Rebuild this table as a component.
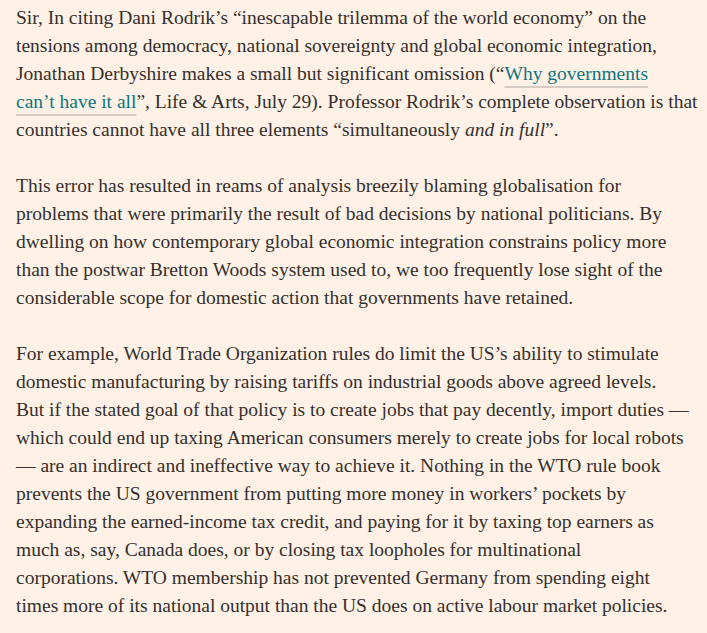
export default function App() {
  const p = "mb-[28px] whitespace-nowrap";
  const link =
    "text-[#0d7680] underline decoration-2 decoration-[#d4cbc2] underline-offset-[6px]";
  return (
    <div className="min-h-screen w-full bg-[#fff1e5] pl-[16px] pr-[4px] pt-[4px] text-[19.5px] leading-[28px] text-[#33302e] [font-family:'Liberation_Serif',serif]">
      <p className={p}>
        Sir, In citing Dani Rodrik’s “inescapable trilemma of the world economy” on the
        <br />
        tensions among democracy, national sovereignty and global economic integration,
        <br />
        Jonathan Derbyshire makes a small but significant omission (“
        <a className={link}>Why governments</a>
        <br />
        <a className={link}>can’t have it all</a>”, Life &amp; Arts, July 29). Professor Rodrik’s complete observation is that
        <br />
        countries cannot have all three elements “simultaneously <em>and in full</em>”.
      </p>
      <p className={p}>
        This error has resulted in reams of analysis breezily blaming globalisation for
        <br />
        problems that were primarily the result of bad decisions by national politicians. By
        <br />
        dwelling on how contemporary global economic integration constrains policy more
        <br />
        than the postwar Bretton Woods system used to, we too frequently lose sight of the
        <br />
        considerable scope for domestic action that governments have retained.
      </p>
      <p className={p}>
        For example, World Trade Organization rules do limit the US’s ability to stimulate
        <br />
        domestic manufacturing by raising tariffs on industrial goods above agreed levels.
        <br />
        But if the stated goal of that policy is to create jobs that pay decently, import duties —
        <br />
        which could end up taxing American consumers merely to create jobs for local robots
        <br />
        — are an indirect and ineffective way to achieve it. Nothing in the WTO rule book
        <br />
        prevents the US government from putting more money in workers’ pockets by
        <br />
        expanding the earned-income tax credit, and paying for it by taxing top earners as
        <br />
        much as, say, Canada does, or by closing tax loopholes for multinational
        <br />
        corporations. WTO membership has not prevented Germany from spending eight
        <br />
        times more of its national output than the US does on active labour market policies.
      </p>
    </div>
  );
}
